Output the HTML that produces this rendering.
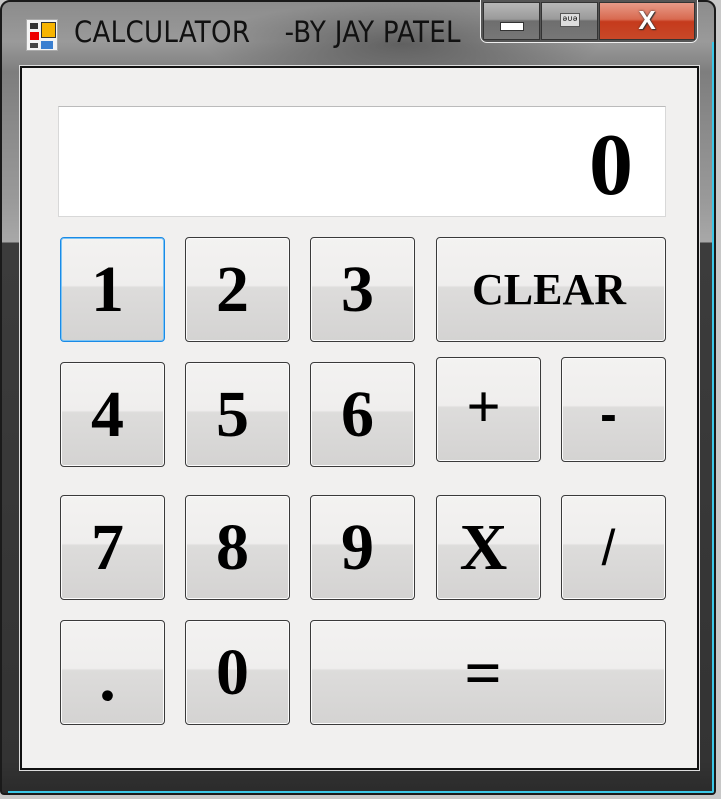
<!DOCTYPE html>
<html><head><meta charset="utf-8"><style>
*{margin:0;padding:0;box-sizing:border-box}
body{width:721px;height:799px;background:#c8c8c8;position:relative;overflow:hidden;font-family:"Liberation Serif",serif}
.win{position:absolute;left:0;top:0;width:716px;height:795px;border:2px solid #1a1a1a;border-radius:10px 10px 4px 4px;
background:linear-gradient(180deg,#8c8c8c 0,#9a9a9a 40px,#7e7e7e 70px,#9a9a9a 200px,#a8a8a8 240px,#3c3c3c 241px,#333 760px,#2a2a2a 795px);overflow:hidden}
.glow{position:absolute;left:200px;top:0;width:400px;height:70px;background:radial-gradient(ellipse at 50% 60%,rgba(50,50,50,.55),rgba(0,0,0,0) 70%)}
.cyan{position:absolute;right:0;top:40px;width:2px;height:755px;background:#3bc8e8}
.cyanb{position:absolute;left:6px;bottom:0;width:710px;height:2px;background:#3bc8e8}
.title{position:absolute;left:74px;top:15px;font:29px "DejaVu Sans Condensed","Liberation Sans",sans-serif;color:#111;letter-spacing:0.3px;white-space:pre}
.icon{position:absolute;left:26px;top:19px;width:32px;height:32px;background:#f4f4f4;border:1px solid #aaa}
.client{position:absolute;left:20px;top:66px;width:679px;height:704px;border:2px solid #111;background:#f1f0ef;outline:1px solid #ddd}
.disp{position:absolute;left:58px;top:106px;width:608px;height:111px;background:#fff;border:1px solid #d8d8d8;border-top-color:#bbb}
.disp span{position:absolute;right:32px;top:8px;font:bold 88px "Liberation Serif",serif;color:#000}
.b{position:absolute;width:105px;height:105px;border:1px solid #3a3a3a;border-radius:4px;
background:linear-gradient(180deg,#f3f2f1 0,#efeeed 46%,#dddcdb 48%,#d4d3d2 100%);box-shadow:inset 0 0 0 1px #fbfbfb;
font:bold 66px "Liberation Serif",serif;color:#000;display:flex;align-items:center;justify-content:center;line-height:1;padding-right:10px}
.f{border-color:#1a8ae6;box-shadow:inset 0 0 0 1px #7cc4f4}
.cap{position:absolute;top:2px;height:38px;border:1px solid #333}
</style></head><body>
<div class="win">
<div class="glow"></div>
<div class="cyan"></div><div class="cyanb"></div>
</div>
<div class="icon">
<div style="position:absolute;left:3px;top:3px;width:8px;height:6px;background:#333"></div>
<div style="position:absolute;left:14px;top:2px;width:15px;height:16px;background:#f8b400;border:1px solid #333"></div>
<div style="position:absolute;left:3px;top:12px;width:9px;height:8px;background:#e00"></div>
<div style="position:absolute;left:14px;top:21px;width:12px;height:8px;background:#3a7fd0"></div>
<div style="position:absolute;left:3px;top:23px;width:8px;height:5px;background:#444"></div>
</div>
<div class="title">CALCULATOR    -BY JAY PATEL</div>
<div style="position:absolute;left:480px;top:0;width:218px;height:43px;border:1px solid #eee;border-top:none;border-radius:0 0 7px 7px;background:#555"></div>
<div class="cap" style="left:483px;width:57px;background:linear-gradient(#b8b8b8,#9a9a9a 45%,#6e6e6e 50%,#777)"><div style="position:absolute;left:16px;top:19px;width:24px;height:9px;background:#fff;border:1px solid #333"></div></div>
<div class="cap" style="left:541px;width:57px;background:linear-gradient(#b8b8b8,#9a9a9a 45%,#6e6e6e 50%,#777)"><div style="position:absolute;left:18px;top:10px;width:20px;height:14px;background:#ddd;border:1px solid #555;font:8px sans-serif;text-align:center">ǝ∪ǝ</div></div>
<div class="cap" style="left:599px;width:96px;background:linear-gradient(#e89a88,#d86a50 45%,#c53a1c 52%,#c84828);color:#fff;font:bold 26px 'Liberation Sans',sans-serif;text-align:center;line-height:34px;text-shadow:0 0 2px #333,1px 1px 1px #333">X</div>
<div class="client"></div>
<div class="disp"><span>0</span></div>
<div class="b f" style="left:60px;top:237px">1</div>
<div class="b" style="left:185px;top:237px">2</div>
<div class="b" style="left:310px;top:237px">3</div>
<div class="b" style="left:436px;top:237px;width:230px;font-size:44px;padding-right:4px">CLEAR</div>
<div class="b" style="left:60px;top:362px">4</div>
<div class="b" style="left:185px;top:362px">5</div>
<div class="b" style="left:310px;top:362px">6</div>
<div class="b" style="left:436px;top:357px;font:58px 'Liberation Sans',sans-serif;padding-bottom:6px">+</div>
<div class="b" style="left:561px;top:357px;font:bold 50px 'Liberation Sans',sans-serif;padding-top:8px">-</div>
<div class="b" style="left:60px;top:495px">7</div>
<div class="b" style="left:185px;top:495px">8</div>
<div class="b" style="left:310px;top:495px">9</div>
<div class="b" style="left:436px;top:495px">X</div>
<div class="b" style="left:561px;top:495px;font:50px 'Liberation Sans',sans-serif;padding-right:10px">/</div>
<div class="b" style="left:60px;top:620px;padding-top:12px">.</div>
<div class="b" style="left:185px;top:620px">0</div>
<div class="b" style="left:310px;top:620px;width:356px;padding-top:2px">=</div>
</body></html>
